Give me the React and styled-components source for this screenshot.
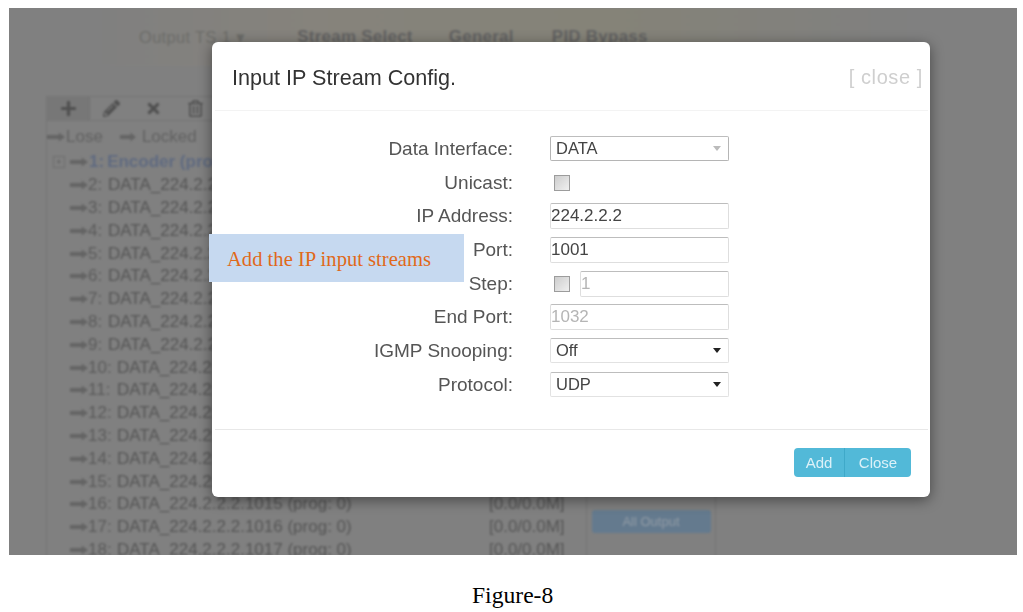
import React from "react";
import styled, { createGlobalStyle } from "styled-components";
import { FaPlus, FaPencilAlt, FaTimes, FaRegTrashAlt } from "react-icons/fa";

const GlobalStyle = createGlobalStyle`
  html, body {
    margin: 0;
    padding: 0;
    background: #ffffff;
    font-family: "Liberation Sans", Arial, sans-serif;
  }
`;

const Page = styled.div`
  width: 1023px;
  height: 612px;
  overflow: hidden;
  background: #ffffff;
  padding: 8px 6px 0 9px;
  box-sizing: border-box;
`;

const Screen = styled.div`
  position: relative;
  height: 547px;
  overflow: hidden;
  background: #808080;
`;

const Backdrop = styled.div`
  height: 100%;
  padding: 0 0 0 37px;
  box-sizing: border-box;
  color: #555555;
  filter: blur(0.8px);
`;

const TopBar = styled.div`
  display: flex;
  align-items: center;
  height: 58px;
  margin: 0 0 30px -37px;
  padding: 0 0 0 130px;
  background: linear-gradient(90deg, #808080 8%, #86837c 30%, #858378 60%, #808080 90%);
`;

const Tab = styled.span`
  margin-right: ${(p) => p.$gap}px;
  font-size: ${(p) => (p.$bold ? 16.9 : 16.5)}px;
  font-weight: ${(p) => (p.$bold ? 700 : 400)};
  color: ${(p) => (p.$bold ? "#626262" : "#6c6c69")};
  letter-spacing: 0.3px;
`;

const Toolbar = styled.div`
  display: flex;
  width: 200px;
  height: 24px;
  border: 1px solid #757575;
  border-bottom: none;
  box-sizing: border-box;
`;

const ToolButton = styled.div`
  display: flex;
  align-items: center;
  justify-content: center;
  width: 42px;
  color: #505050;
  font-size: 17px;
  background: ${(p) => (p.$active ? "#777777" : "transparent")};
  border-right: ${(p) => (p.$active ? "1px solid #717171" : "none")};
`;

const Panels = styled.div`
  display: flex;
  height: 460px;
`;

const TreePanel = styled.div`
  width: 541px;
  padding: 5px 0 0 0;
  box-sizing: border-box;
  border-left: 1px solid #757575;
  border-top: 1px solid #757575;
  border-right: 1px solid #757575;
`;

const Legend = styled.div`
  display: flex;
  align-items: center;
  height: 22px;
  font-size: 17px;
  color: #616161;
`;

const LegendItem = styled.span`
  display: flex;
  align-items: center;
  gap: ${(p) => p.$gap}px;
  margin-right: ${(p) => p.$after}px;
`;

const TreeList = styled.div`
  margin-top: 3px;
  padding-left: 6px;
`;

const Row = styled.div`
  display: flex;
  align-items: center;
  height: 22.8px;
  padding-left: ${(p) => (p.$root ? 0 : 17)}px;
  font-size: 17px;
  white-space: nowrap;
`;

const Expander = styled.span`
  display: inline-flex;
  align-items: center;
  justify-content: center;
  width: 10px;
  height: 10px;
  margin-right: 5px;
  border: 1px solid #6e6e6e;
  font-size: 9px;
  line-height: 1;
`;

const Num = styled.span`
  flex: 0 0 ${(p) => (p.$wide ? 29 : 20)}px;
  color: #5a5a5a;
`;

const RootNum = styled.span`
  margin: 0 3px 0 1px;
  font-weight: 700;
  color: #5f6a80;
`;

const RootName = styled.span`
  font-weight: 700;
  color: #5f6a80;
`;

const Name = styled.span`
  flex: 0 0 ${(p) => p.$width}px;
  color: #555555;
`;

const Rate = styled.span`
  color: #555555;
`;

const SidePanel = styled.div`
  display: flex;
  flex-direction: column;
  align-items: center;
  width: 129px;
  padding-top: 390px;
  box-sizing: border-box;
  border-right: 1px solid #757575;
`;

const AllOutput = styled.div`
  width: 119px;
  height: 23px;
  line-height: 23px;
  text-align: center;
  font-size: 13px;
  color: #929ca6;
  background: #647a8e;
  border-radius: 3px;
`;

const Modal = styled.div`
  position: absolute;
  top: 34px;
  left: 203px;
  display: flex;
  flex-direction: column;
  width: 718px;
  height: 455px;
  padding: 0 2px 0 3px;
  box-sizing: border-box;
  background: #ffffff;
  border-radius: 6px;
  box-shadow: 0 3px 14px rgba(0, 0, 0, 0.45);
`;

const ModalHeader = styled.div`
  display: flex;
  align-items: center;
  justify-content: space-between;
  flex: 0 0 69px;
  padding: 3px 5px 0 17px;
  box-sizing: border-box;
  border-bottom: 1px solid #f3f3f3;
`;

const Title = styled.div`
  font-size: 21.6px;
  color: #333333;
  filter: blur(0.3px);
`;

const CloseLink = styled.div`
  font-size: 20px;
  letter-spacing: 0.6px;
  color: #cfcfcf;
  filter: blur(0.3px);
`;

const ModalBody = styled.div`
  flex: 0 0 319px;
  padding-top: 21px;
  box-sizing: border-box;
  border-bottom: 1px solid #e8e8e8;
`;

const Form = styled.div`
  display: grid;
  grid-template-columns: 298px 179px;
  grid-auto-rows: 33.7px;
  column-gap: 37px;
  align-items: center;
  filter: blur(0.3px);
`;

const Label = styled.label`
  text-align: right;
  font-size: 19px;
  color: #555555;
`;

const Field = styled.div`
  display: flex;
  align-items: center;
  gap: 10px;
`;

const Input = styled.input`
  width: 100%;
  min-width: 0;
  height: 26px;
  padding: 0;
  box-sizing: border-box;
  border: 1px solid #dedede;
  border-top-color: #bdbdbd;
  border-radius: 2px;
  outline: none;
  background: #ffffff;
  font-family: inherit;
  font-size: 17px;
  color: ${(p) => (p.disabled ? "#b5b5b5" : "#444444")};
`;

const Select = styled.div`
  display: flex;
  align-items: center;
  justify-content: space-between;
  height: 25px;
  padding: 0 7px 0 5px;
  box-sizing: border-box;
  border: 1px solid ${(p) => (p.$focus ? "#b5b5b5" : "#e2e2e2")};
  border-top-color: #bdbdbd;
  border-radius: 2px;
  font-size: 16.5px;
  color: #444444;
`;

const Caret = styled.span`
  width: 0;
  height: 0;
  border-left: 4px solid transparent;
  border-right: 4px solid transparent;
  border-top: 5px solid ${(p) => (p.$light ? "#bbbbbb" : "#222222")};
`;

const Check = styled.span`
  flex: none;
  width: 16px;
  height: 16px;
  margin-left: 4px;
  box-sizing: border-box;
  border: 1px solid #9c9c9c;
  background: linear-gradient(135deg, #cdcdcd, #f0f0f0);
`;

const ModalFooter = styled.div`
  display: flex;
  justify-content: flex-end;
  flex: 1;
  padding: 18px 17px 0 0;
`;

const ButtonGroup = styled.div`
  display: flex;
  height: 29px;
  border-radius: 4px;
  overflow: hidden;
`;

const Button = styled.div`
  display: flex;
  align-items: center;
  justify-content: center;
  width: ${(p) => p.$width}px;
  background: #52b9d8;
  border-left: ${(p) => (p.$joined ? "1px solid #3fa9c9" : "none")};
  font-size: 15px;
  color: #dcf1f8;
  filter: blur(0.2px);
`;

const Callout = styled.div`
  position: absolute;
  top: 226px;
  left: 200px;
  width: 255px;
  height: 48px;
  padding-left: 18px;
  box-sizing: border-box;
  line-height: 50px;
  background: #c6d9f0;
  font-family: "Liberation Serif", "Times New Roman", serif;
  font-size: 20.6px;
  color: #e0691a;
`;

const Caption = styled.div`
  padding: 27px 0 0 463px;
  font-family: "Liberation Serif", "Times New Roman", serif;
  font-size: 23.6px;
  color: #000000;
`;

const ArrowSvg = styled.svg`
  flex: none;
  display: block;
`;

const Arrow = ({ width = 18 }) => (
  <ArrowSvg width={width} height="10" viewBox="0 0 20 10" preserveAspectRatio="none">
    <path d="M0 3h13V0.5l7 4.5-7 4.500V7H0z" fill="#646464" />
  </ArrowSvg>
);

const names = [
  "2.2.2.1001", "2.2.2.1002", "2.2.2.1003", "2.2.2.1004", "2.2.2.1005", "2.2.2.1006",
  "2.2.2.1007", "2.2.2.1008", "2.2.2.1009", "2.2.2.1010", "2.2.2.1011", "2.2.2.1012",
  "2.2.2.1013", "2.2.2.1014", "2.2.2.1015", "2.2.2.1016", "2.2.2.1017",
];

export default function App() {
  return (
    <Page>
      <GlobalStyle />
      <Screen>
        <Backdrop>
          <TopBar>
            <Tab $gap={52}>Output TS 1 ▾</Tab>
            <Tab $gap={36} $bold>Stream Select</Tab>
            <Tab $gap={38} $bold>General</Tab>
            <Tab $gap={0} $bold>PID Bypass</Tab>
          </TopBar>
          <Toolbar>
            <ToolButton $active><FaPlus /></ToolButton>
            <ToolButton><FaPencilAlt /></ToolButton>
            <ToolButton><FaTimes /></ToolButton>
            <ToolButton><FaRegTrashAlt /></ToolButton>
          </Toolbar>
          <Panels>
            <TreePanel>
              <Legend>
                <LegendItem $gap={1} $after={17}><Arrow />Lose</LegendItem>
                <LegendItem $gap={6} $after={0}><Arrow width={16} />Locked</LegendItem>
              </Legend>
              <TreeList>
                <Row $root>
                  <Expander>+</Expander>
                  <Arrow />
                  <RootNum>1:</RootNum>
                  <RootName>Encoder (prog: 1)</RootName>
                </Row>
                {names.map((n, i) => (
                  <Row key={n}>
                    <Arrow />
                    <Num $wide={i + 2 >= 10}>{i + 2}:</Num>
                    <Name $width={i + 2 < 10 ? 381 : 372}>DATA_224.{n} (prog: 0)</Name>
                    <Rate>[0.0/0.0M]</Rate>
                  </Row>
                ))}
              </TreeList>
            </TreePanel>
            <SidePanel>
              <AllOutput>All Output</AllOutput>
            </SidePanel>
          </Panels>
        </Backdrop>

        <Modal>
          <ModalHeader>
            <Title>Input IP Stream Config.</Title>
            <CloseLink>[ close ]</CloseLink>
          </ModalHeader>
          <ModalBody>
            <Form>
              <Label>Data Interface:</Label>
              <Select $focus>DATA<Caret $light /></Select>
              <Label>Unicast:</Label>
              <Field><Check /></Field>
              <Label>IP Address:</Label>
              <Input readOnly value="224.2.2.2" />
              <Label>Port:</Label>
              <Input readOnly value="1001" />
              <Label>Step:</Label>
              <Field><Check /><Input disabled readOnly value="1" /></Field>
              <Label>End Port:</Label>
              <Input disabled readOnly value="1032" />
              <Label>IGMP Snooping:</Label>
              <Select>Off<Caret /></Select>
              <Label>Protocol:</Label>
              <Select>UDP<Caret /></Select>
            </Form>
          </ModalBody>
          <ModalFooter>
            <ButtonGroup>
              <Button $width={50}>Add</Button>
              <Button $width={66} $joined>Close</Button>
            </ButtonGroup>
          </ModalFooter>
        </Modal>

        <Callout>Add the IP input streams</Callout>
      </Screen>
      <Caption>Figure-8</Caption>
    </Page>
  );
}
